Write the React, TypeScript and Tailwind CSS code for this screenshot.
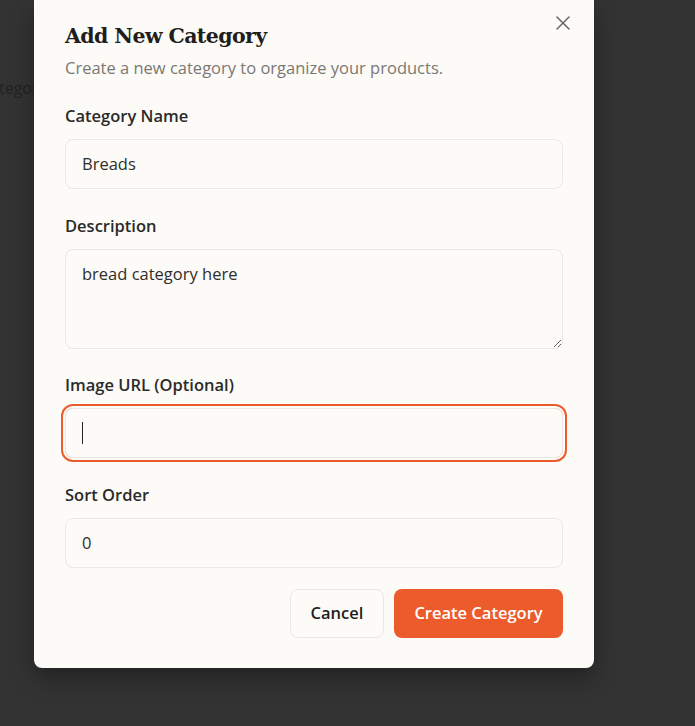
import React from 'react';
import { X } from 'lucide-react';

const sans = { fontFamily: '"Open Sans", "Noto Sans", sans-serif' };

const Field: React.FC<{ label: string; children: React.ReactNode; className?: string }> = ({ label, children, className }) => (
  <div className={`flex flex-col ${className ?? ''}`}>
    <label className="h-6 text-[16.5px] leading-6 font-semibold text-[#2b2a28]">{label}</label>
    <div className="mt-[11px]">{children}</div>
  </div>
);

export default function App() {
  return (
    <div className="flex h-[726px] w-full overflow-hidden bg-[#333333]" style={sans}>
      {/* page behind the overlay */}
      <div className="w-[34px] flex-shrink-0 overflow-hidden pt-[76px]">
        <span className="block -ml-[20px] whitespace-nowrap text-base leading-6 text-[#222222]">Categories</span>
      </div>

      {/* Dialog */}
      <div className="w-[560px] h-[668px] flex-shrink-0 flex flex-col rounded-b-lg bg-[#fcfbf8] px-[31px] shadow-[0_10px_25px_rgba(0,0,0,0.35)]">
        <div className="flex items-start justify-between pt-[22px]">
          <div className="flex flex-col">
            <h2 className="text-[20.5px] leading-7 font-bold tracking-[-0.6px] text-[#1f1e1c]" style={{ fontFamily: '"DejaVu Serif", "Liberation Serif", serif' }}>
              Add New Category
            </h2>
            <p className="mt-[6px] text-[16.5px] leading-6 text-[#7b7872]">Create a new category to organize your products.</p>
          </div>
          <button className="-mr-[12px] -mt-[11px] text-[#666461]">
            <X size={24} strokeWidth={1.5} />
          </button>
        </div>

        <Field label="Category Name" className="mt-[24px]">
          <div className="flex h-[50px] items-center rounded-lg border border-[#ebe8e3] px-4 text-[16.5px] text-[#2f2e2c]">Breads</div>
        </Field>

        <Field label="Description" className="mt-[25px]">
          <textarea
            defaultValue="bread category here"
            className="block h-[100px] w-full rounded-lg border border-[#ebe8e3] bg-transparent px-4 py-3 text-[16.5px] leading-6 text-[#2f2e2c] outline-none"
          />
        </Field>

        <Field label="Image URL (Optional)" className="mt-[24px]">
          <div className="flex h-[50px] items-center rounded-lg border border-[#ebe8e3] px-4 ring-2 ring-[#ec5b2c] ring-offset-2 ring-offset-[#fcfbf8]">
            <span className="block h-[22px] w-px bg-[#222]"></span>
          </div>
        </Field>

        <Field label="Sort Order" className="mt-[25px]">
          <div className="flex h-[50px] items-center rounded-lg border border-[#ebe8e3] px-4 text-[16.5px] text-[#2f2e2c]">0</div>
        </Field>

        <div className="mt-[21px] flex justify-end gap-[10px]">
          <button className="h-[49px] w-[94px] rounded-lg border border-[#ebe8e3] text-[16.5px] font-semibold text-[#1f1e1c]">Cancel</button>
          <button className="h-[49px] w-[169px] rounded-lg bg-[#ec5b2c] text-[16.5px] font-semibold text-white">Create Category</button>
        </div>
      </div>
    </div>
  );
}
